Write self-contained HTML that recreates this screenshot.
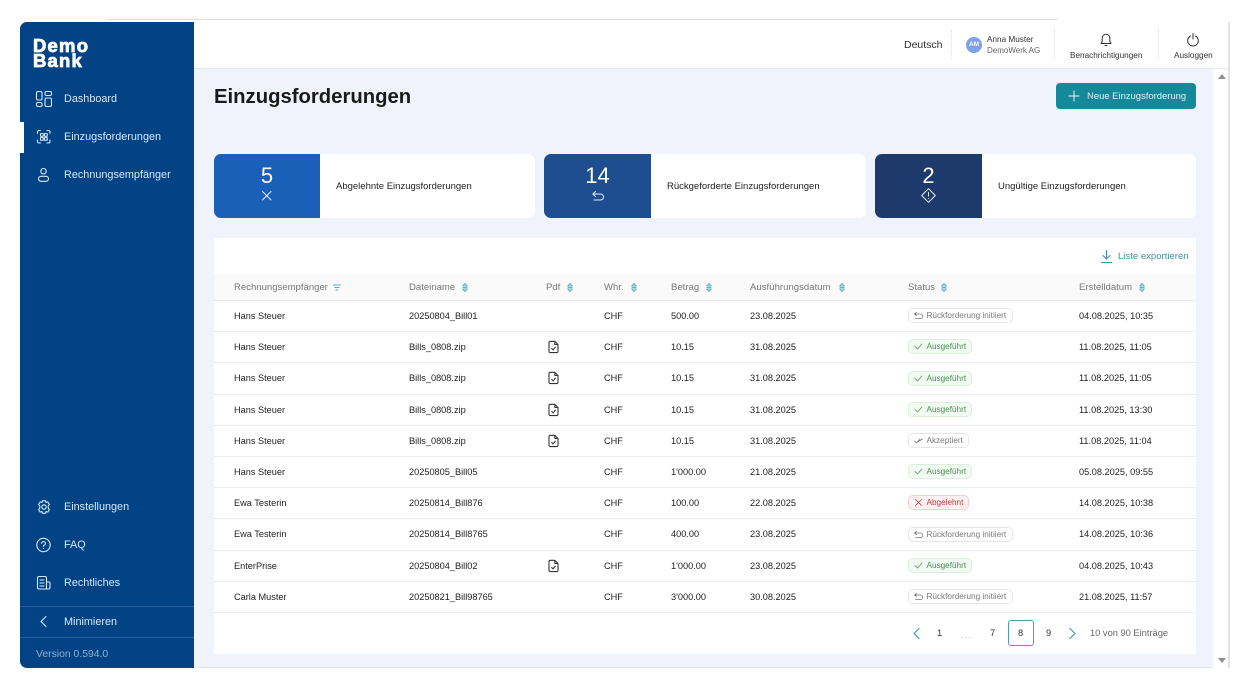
<!DOCTYPE html>
<html lang="de"><head><meta charset="utf-8"><title>Einzugsforderungen</title>
<style>
*{box-sizing:border-box}
html,body{margin:0;padding:0;width:1250px;height:689px;overflow:hidden;background:#fff;font-family:"Liberation Sans",sans-serif;color:#2b2b2b}
.a{position:absolute;white-space:nowrap}
svg{position:absolute;overflow:visible;fill:none;stroke-linecap:round;stroke-linejoin:round}
.side{position:absolute;left:20px;top:22px;width:174px;height:646px;background:#024385;border-radius:7px 0 0 7px}
.nav{position:absolute;white-space:nowrap;left:64px;font-size:10.85px;color:#d4e8fb;line-height:14px}
.nav svg{stroke:#d4e8fb;stroke-width:1.1}
.th{position:absolute;white-space:nowrap;top:281px;font-size:9.55px;line-height:13px;color:#777}
.sort{position:absolute;top:283px;width:6px;height:9px}
.row{position:absolute;left:214px;width:982px;height:31px;border-bottom:1.5px solid #ececec;font-size:9.2px}
.row span{position:absolute;top:9px;line-height:13px;white-space:nowrap;color:#222}
.row .n{left:20px}.row .f{left:195px}.row .w{left:390px}.row .b{left:457px}.row .d{left:536px}.row .e{left:865px}
.row svg{left:334px;top:8px;width:11px;height:13.5px;stroke:#333;stroke-width:1.2}
.row .p{left:694px;top:7px;height:15px;border-radius:5px;border:1px solid #e6e6e6;background:#fff;font-size:8.2px;line-height:13px;color:#7a7a7a;padding-left:17.5px}
.row .p svg{left:5px;top:3px;width:9px;height:7px;stroke:#777;stroke-width:.8}
.row .ok{background:#f1fbf1;border-color:#dcefdc;color:#4c8f55}
.row .ok svg{stroke:#4c9a55}
.row .no{background:#fdf0f0;border-color:#f5cfcf;color:#b5404a}
.row .no svg{stroke:#b5404a}
.card{position:absolute;top:154px;height:64px;background:#fff;border-radius:7px}
.card i{position:absolute;left:0;top:0;width:106px;height:64px;border-radius:7px 0 0 7px}
.card b{position:absolute;left:0;width:106px;top:9px;text-align:center;font-weight:400;font-size:22px;line-height:26px;color:#fff}
.card span{position:absolute;left:122px;top:26px;font-size:9.5px;line-height:14px;white-space:nowrap;color:#222}
.card svg{stroke:#e6eef8;stroke-width:1}
.pg{position:absolute;top:627px;font-size:9.3px;line-height:13px;color:#333;white-space:nowrap}
</style></head><body>
<svg width="0" height="0" style="position:absolute"><defs>
<symbol id="doc" viewBox="0 0 12 15"><path d="M2.5 1.5H7.5L11 5V12.5A1.5 1.5 0 0 1 9.5 14H2.5A1.5 1.5 0 0 1 1 12.5V3A1.5 1.5 0 0 1 2.5 1.5ZM7.5 1.5V5H11M4 9.5L5.5 11L8 8"/></symbol>
<symbol id="ret" viewBox="0 0 9 7"><path d="M2.5 .5L.5 2L2.5 3.5M.5 2H6.5A2 2 0 0 1 6.5 6.5H1.5"/></symbol>
<symbol id="chk" viewBox="0 0 9 7"><path d="M1 3.5L3.5 6L8 1"/></symbol>
<symbol id="chk2" viewBox="0 0 9 7"><path d="M.5 4L2.5 6L6 2M3.5 5L8.5 2"/></symbol>
<symbol id="xx" viewBox="0 0 9 7"><path d="M1.5 .5L7.5 6.5M7.5 .5L1.5 6.5"/></symbol>
<symbol id="srt" viewBox="0 0 6 9"><path d="M3 .5L5.3 3H.7ZM3 8.5L5.3 6H.7ZM1 4.5H5" stroke="#5fb5bf" stroke-width="1"/></symbol>
</defs></svg>

<div class="a" style="left:108px;top:19px;width:950px;height:1px;background:#dcdcdc"></div>
<div class="a" style="left:1228px;top:22px;width:2px;height:646px;background:#e2e2e2"></div>
<div class="a" style="left:194px;top:23px;width:1034px;height:46px;background:#fff;border-bottom:1px solid #e6e8ee;border-radius:0 6px 0 0"></div>
<div class="a" style="left:194px;top:69px;width:1019px;height:599px;background:#f0f3fb;border-bottom:1px solid #e2e4ea"></div>
<div class="a" style="left:1213px;top:69px;width:15px;height:599px;background:#fff"></div>
<div class="a" style="left:1218px;top:74px;width:0;height:0;border:4px solid transparent;border-top:0;border-bottom:5px solid #8f8f8f"></div>
<div class="a" style="left:1218px;top:658px;width:0;height:0;border:4px solid transparent;border-bottom:0;border-top:5px solid #8f8f8f"></div>

<!-- sidebar -->
<div class="side"></div>
<div class="a" style="left:33px;top:39px;font-size:18.5px;line-height:14.5px;font-weight:700;color:#fff;letter-spacing:1.2px;-webkit-text-stroke:.8px #fff">Demo<br>Bank</div>
<div class="a" style="left:20px;top:122px;width:4px;height:31px;background:#fff"></div>

<div class="nav" style="top:92px">Dashboard<svg style="left:-28px;top:-1px" width="16" height="16"><rect x=".5" y=".5" width="5.5" height="8.5" rx="1.5"/><rect x="9" y=".5" width="6.5" height="4" rx="1.5"/><rect x=".5" y="11.5" width="5.5" height="4" rx="1.5"/><rect x="9" y="7" width="6.5" height="8.5" rx="1.5"/></svg></div>
<div class="nav" style="top:130px">Einzugsforderungen<svg style="left:-27px;top:0" width="14" height="14"><path d="M.5 3.5V2A1.5 1.5 0 0 1 2 .5H3.5M10 .5H11.5A1.5 1.5 0 0 1 13 2V3.5M13 10V11.5A1.5 1.5 0 0 1 11.5 13H10M3.5 13H2A1.5 1.5 0 0 1 .5 11.5V10"/><rect x="3.5" y="3.5" width="2.8" height="2.8" rx=".6"/><rect x="7.5" y="3.5" width="2.8" height="2.8" rx=".6"/><rect x="3.5" y="7.5" width="2.8" height="2.8" rx=".6"/><rect x="7.5" y="7.5" width="2.8" height="2.8" rx=".6"/></svg></div>
<div class="nav" style="top:168px">Rechnungsempfänger<svg style="left:-26px;top:0" width="11" height="14"><circle cx="5.5" cy="3.2" r="2.7"/><rect x=".5" y="8.3" width="10" height="5" rx="2.5"/></svg></div>
<div class="nav" style="top:500px">Einstellungen<svg style="left:-27px;top:0" width="14" height="14"><path d="M5.5 .7H8.5L9 2.5L10.8 1.9L12.4 4.4L11.2 6V8L12.4 9.6L10.8 12.1L9 11.5L8.5 13.3H5.5L5 11.5L3.2 12.1L1.6 9.6L2.8 8V6L1.6 4.4L3.2 1.9L5 2.5Z"/><circle cx="7" cy="7" r="2.2"/></svg></div>
<div class="nav" style="top:538px">FAQ<svg style="left:-28px;top:0" width="15" height="15"><circle cx="7.5" cy="7" r="6.7"/><path d="M5.6 5.3A1.9 1.9 0 1 1 7.5 7.4V8.3M7.5 10.4V10.5"/></svg></div>
<div class="nav" style="top:576px">Rechtliches<svg style="left:-27px;top:0" width="14" height="14"><path d="M3.5 13H2A1.5 1.5 0 0 1 .5 11.5V2A1.5 1.5 0 0 1 2 .5H8A1.5 1.5 0 0 1 9.5 2V13H3.5ZM9.5 6H12A1 1 0 0 1 13 7V11.5A1.5 1.5 0 0 1 11.5 13H9.5M3 4H7M3 7H7M3 10H7"/></svg></div>
<div class="a" style="left:20px;top:606px;width:174px;height:1px;background:#27609c"></div>
<div class="nav" style="top:615px">Minimieren<svg style="left:-24px;top:1px" width="7" height="11"><path d="M6 .5L1 5.5L6 10.5"/></svg></div>
<div class="a" style="left:20px;top:637px;width:174px;height:1px;background:#27609c"></div>
<div class="a" style="left:36px;top:647px;font-size:10.4px;line-height:15px;color:#8fb0d2">Version 0.594.0</div>

<!-- header -->
<div class="a" style="left:904px;top:38px;font-size:10.5px;line-height:15px;color:#333">Deutsch</div>
<div class="a" style="left:951px;top:30px;height:30px;border-left:1px dotted #ddd"></div>
<div class="a" style="left:966px;top:37px;width:16px;height:16px;border-radius:50%;background:#7f9fe8;color:#fff;font-size:6.5px;font-weight:700;line-height:16px;text-align:center">AM</div>
<div class="a" style="left:987px;top:34px;font-size:8.2px;line-height:11px;color:#333">Anna Muster</div>
<div class="a" style="left:987px;top:45px;font-size:8px;line-height:11px;color:#666">DemoWerk AG</div>
<div class="a" style="left:1054px;top:30px;height:30px;border-left:1px dotted #ddd"></div>
<svg style="left:1100px;top:33px;stroke:#333;stroke-width:1" width="12" height="14"><path d="M1 10.5H11L9.8 8.5V5A3.8 3.8 0 0 0 2.2 5V8.5ZM5 12.5H7"/></svg>
<div class="a" style="left:1070px;top:49.5px;font-size:8.2px;line-height:11px;color:#333">Benachrichtigungen</div>
<div class="a" style="left:1158px;top:30px;height:30px;border-left:1px dotted #ddd"></div>
<svg style="left:1187px;top:33px;stroke:#333;stroke-width:1" width="12" height="13"><path d="M3.5 3A5.3 5.3 0 1 0 8.5 3M6 .5V6"/></svg>
<div class="a" style="left:1174px;top:49.5px;font-size:8.2px;line-height:11px;color:#333">Ausloggen</div>

<!-- title -->
<div class="a" style="left:214px;top:84px;font-size:20.3px;line-height:27px;font-weight:700;color:#1a1a1a">Einzugsforderungen</div>
<div class="a" style="left:1056px;top:83px;width:140px;height:26px;background:#14899a;border-radius:4px"></div>
<svg style="left:1069px;top:91px;stroke:#e8f5f7;stroke-width:1" width="10" height="10"><path d="M5 0V10M0 5H10"/></svg>
<div class="a" style="left:1087px;top:90px;font-size:9.45px;line-height:14px;color:#dff1f3">Neue Einzugsforderung</div>

<!-- cards -->
<div class="card" style="left:214px;width:321px"><i style="background:#1a60b8"></i><b>5</b><svg style="left:48px;top:37px" width="10" height="10"><path d="M.5 .5L9 9M9 .5L.5 9"/></svg><span>Abgelehnte Einzugsforderungen</span></div>
<div class="card" style="left:544px;width:322px"><i style="background:#1e4e90;width:107px"></i><b style="width:107px">14</b><svg style="left:48px;top:37px" width="12" height="10"><path d="M3.5 .5L.8 3L3.5 5.5M.8 3H8.5A3 3 0 0 1 8.5 9H2"/></svg><span style="left:123px">Rückgeforderte Einzugsforderungen</span></div>
<div class="card" style="left:875px;width:321px"><i style="background:#1e3a6c;width:107px"></i><b style="width:107px">2</b><svg style="left:46px;top:34px" width="15" height="15"><path d="M7.5 .7L14.3 7.5L7.5 14.3L.7 7.5Z"/><path d="M7.5 4.5V8M7.5 10.3V10.4"/></svg><span style="left:123px">Ungültige Einzugsforderungen</span></div>

<!-- table -->
<div class="a" style="left:214px;top:238px;width:982px;height:416px;background:#fff"></div>
<svg style="left:1101px;top:250px;stroke:#2a96a8;stroke-width:1" width="11" height="13"><path d="M5.5 .5V8.5M2 5.5L5.5 9L9 5.5M.5 12.5H10.5"/></svg>
<div class="a" style="left:1118px;top:250px;font-size:9.55px;line-height:14px;color:#3d95a5">Liste exportieren</div>
<div class="a" style="left:214px;top:274px;width:982px;height:27px;background:#fafafa;border-bottom:1.5px solid #e8e8e8"></div>

<div class="th" style="left:234px">Rechnungsempfänger</div>
<svg style="left:333px;top:283.5px;stroke:#4fb0bb;stroke-width:1" width="8" height="7"><path d="M.5 1H7.5M1.8 3.5H6.2M3 6H5"/></svg>
<div class="th" style="left:409px">Dateiname</div><svg class="sort" style="left:462px"><use href="#srt"/></svg>
<div class="th" style="left:546px">Pdf</div><svg class="sort" style="left:567px"><use href="#srt"/></svg>
<div class="th" style="left:604px">Whr.</div><svg class="sort" style="left:631px"><use href="#srt"/></svg>
<div class="th" style="left:671px">Betrag</div><svg class="sort" style="left:706px"><use href="#srt"/></svg>
<div class="th" style="left:750px;letter-spacing:.03px">Ausführungsdatum</div><svg class="sort" style="left:839px"><use href="#srt"/></svg>
<div class="th" style="left:908px">Status</div><svg class="sort" style="left:941px"><use href="#srt"/></svg>
<div class="th" style="left:1079px">Erstelldatum</div><svg class="sort" style="left:1139px"><use href="#srt"/></svg>

<div class="row" style="top:301px"><span class="n">Hans Steuer</span><span class="f">20250804_Bill01</span><span class="w">CHF</span><span class="b">500.00</span><span class="d">23.08.2025</span><span class="p" style="width:105px"><svg><use href="#ret"/></svg>Rückforderung initiiert</span><span class="e">04.08.2025, 10:35</span></div>
<div class="row" style="top:332px"><span class="n">Hans Steuer</span><span class="f">Bills_0808.zip</span><svg><use href="#doc"/></svg><span class="w">CHF</span><span class="b">10.15</span><span class="d">31.08.2025</span><span class="p ok" style="width:64px"><svg><use href="#chk"/></svg>Ausgeführt</span><span class="e">11.08.2025, 11:05</span></div>
<div class="row" style="top:363px;height:32px"><span class="n">Hans Steuer</span><span class="f">Bills_0808.zip</span><svg><use href="#doc"/></svg><span class="w">CHF</span><span class="b">10.15</span><span class="d">31.08.2025</span><span class="p ok" style="width:64px;top:8px"><svg><use href="#chk"/></svg>Ausgeführt</span><span class="e">11.08.2025, 11:05</span></div>
<div class="row" style="top:395px"><span class="n">Hans Steuer</span><span class="f">Bills_0808.zip</span><svg><use href="#doc"/></svg><span class="w">CHF</span><span class="b">10.15</span><span class="d">31.08.2025</span><span class="p ok" style="width:64px"><svg><use href="#chk"/></svg>Ausgeführt</span><span class="e">11.08.2025, 13:30</span></div>
<div class="row" style="top:426px"><span class="n">Hans Steuer</span><span class="f">Bills_0808.zip</span><svg><use href="#doc"/></svg><span class="w">CHF</span><span class="b">10.15</span><span class="d">31.08.2025</span><span class="p" style="width:61px"><svg><use href="#chk2"/></svg>Akzeptiert</span><span class="e">11.08.2025, 11:04</span></div>
<div class="row" style="top:457px"><span class="n">Hans Steuer</span><span class="f">20250805_Bill05</span><span class="w">CHF</span><span class="b">1'000.00</span><span class="d">21.08.2025</span><span class="p ok" style="width:64px"><svg><use href="#chk"/></svg>Ausgeführt</span><span class="e">05.08.2025, 09:55</span></div>
<div class="row" style="top:488px"><span class="n">Ewa Testerin</span><span class="f">20250814_Bill876</span><span class="w">CHF</span><span class="b">100.00</span><span class="d">22.08.2025</span><span class="p no" style="width:61px"><svg><use href="#xx"/></svg>Abgelehnt</span><span class="e">14.08.2025, 10:38</span></div>
<div class="row" style="top:519px;height:32px"><span class="n">Ewa Testerin</span><span class="f">20250814_Bill8765</span><span class="w">CHF</span><span class="b">400.00</span><span class="d">23.08.2025</span><span class="p" style="width:105px;top:8px"><svg><use href="#ret"/></svg>Rückforderung initiiert</span><span class="e">14.08.2025, 10:36</span></div>
<div class="row" style="top:551px"><span class="n">EnterPrise</span><span class="f">20250804_Bill02</span><svg><use href="#doc"/></svg><span class="w">CHF</span><span class="b">1'000.00</span><span class="d">23.08.2025</span><span class="p ok" style="width:64px"><svg><use href="#chk"/></svg>Ausgeführt</span><span class="e">04.08.2025, 10:43</span></div>
<div class="row" style="top:582px"><span class="n">Carla Muster</span><span class="f">20250821_Bill98765</span><span class="w">CHF</span><span class="b">3'000.00</span><span class="d">30.08.2025</span><span class="p" style="width:105px"><svg><use href="#ret"/></svg>Rückforderung initiiert</span><span class="e">21.08.2025, 11:57</span></div>

<!-- pagination -->
<svg style="left:913px;top:627.5px;stroke:#3d9fb0;stroke-width:1.2" width="7" height="11"><path d="M6 .5L1 5.5L6 10.5"/></svg>
<div class="pg" style="left:937px">1</div>
<div class="pg" style="left:961px;top:629px;color:#8fbcc6;letter-spacing:1px">...</div>
<div class="pg" style="left:990px">7</div>
<div class="a" style="left:1008px;top:620px;width:26px;height:26px;border:1px solid #4aa3b3;border-radius:3px"></div>
<div class="pg" style="left:1018px">8</div>
<div class="pg" style="left:1046px">9</div>
<svg style="left:1069px;top:627.5px;stroke:#3d9fb0;stroke-width:1.2" width="7" height="11"><path d="M1 .5L6 5.5L1 10.5"/></svg>
<div class="pg" style="left:1090px;color:#666">10 von 90 Einträge</div>
</body></html>
